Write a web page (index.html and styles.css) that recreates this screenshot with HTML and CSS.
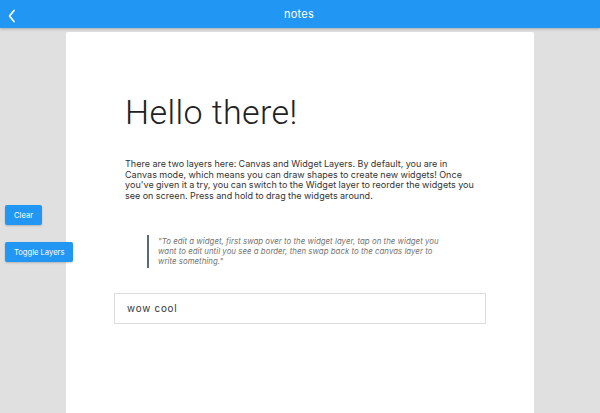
FILE: index.html
```html
<!DOCTYPE html>
<html>
<head>
<meta charset="utf-8">
<link rel="stylesheet" href="styles.css">
</head>
<body>
<header class="appbar">
  <svg class="back" width="10" height="14" viewBox="0 0 10 14"><path d="M8 1.5 L3.5 7 L8 12.5" fill="none" stroke="#fff" stroke-width="1.7" stroke-linecap="round" stroke-linejoin="round"/></svg>
  <div class="title">notes</div>
</header>
<div class="stage">
  <aside class="tools">
    <button class="btn">Clear</button>
    <button class="btn">Toggle Layers</button>
  </aside>
  <main class="paper">
    <h1 class="heading">Hello there!</h1>
    <p class="intro">There are two layers here: Canvas and Widget Layers. By default, you are in<br>Canvas mode, which means you can draw shapes to create new widgets! Once<br>you've given it a try, you can switch to the Widget layer to reorder the widgets you<br>see on screen. Press and hold to drag the widgets around.</p>
    <blockquote class="quote">"To edit a widget, first swap over to the widget layer, tap on the widget you<br>want to edit until you see a border, then swap back to the canvas layer to<br>write something."</blockquote>
    <div class="field">wow cool</div>
  </main>
  <div class="right"></div>
</div>
</body>
</html>
```
FILE: styles.css
```css
html, body {
  margin: 0;
  padding: 0;
  height: 100%;
}
body {
  background: #e1e0e1;
  font-family: "Inter", "Liberation Sans", sans-serif;
  overflow: hidden;
}
.appbar {
  position: relative;
  height: 28px;
  background: #2196f3;
  display: flex;
  align-items: center;
  justify-content: center;
  box-shadow: 0 1px 3px rgba(0,0,0,0.25);
  z-index: 2;
}
.back {
  position: absolute;
  left: 6px;
  top: 9px;
}
.title {
  color: #fff;
  font-size: 11px;
  letter-spacing: 0.2px;
  margin-left: -2px;
}
.stage {
  display: flex;
  padding-top: 4px;
  height: 381px;
}
.tools {
  width: 66px;
  display: flex;
  flex-direction: column;
  align-items: flex-start;
  padding-top: 173px;
  gap: 17px;
}
.btn {
  margin-left: 5px;
  background: #2196f3;
  color: #fff;
  border: none;
  border-radius: 2px;
  font-family: "Inter", "Liberation Sans", sans-serif;
  font-size: 7.6px;
  height: 20px;
  padding: 0 9px;
  box-shadow: 0 1px 2px rgba(0,0,0,0.2);
  white-space: nowrap;
  position: relative;
  z-index: 1;
}
.paper {
  width: 468px;
  background: #fff;
  box-sizing: border-box;
  padding: 54px 0 0 59px;
  border-radius: 2px 2px 0 0;
}
.heading {
  margin: 0;
  font-family: "Roboto", "Liberation Sans", sans-serif;
  font-weight: 300;
  font-size: 34px;
  line-height: 52px;
  color: #222;
  letter-spacing: 0.4px;
}
.intro {
  margin: 21px 0 0 0;
  width: 370px;
  white-space: nowrap;
  font-size: 9px;
  line-height: 10.5px;
  letter-spacing: 0.05px;
  word-spacing: -0.3px;
  color: #333;
}
.quote {
  margin: 34px 0 0 22px;
  border-left: 2px solid #5a6a7a;
  padding: 2px 0 2px 9px;
  width: 300px;
  white-space: nowrap;
  font-style: italic;
  font-size: 7.8px;
  line-height: 9.8px;
  letter-spacing: 0.05px;
  color: #737373;
}
.field {
  margin: 25px 0 0 -11px;
  width: 372px;
  height: 31px;
  box-sizing: border-box;
  border: 1px solid #ddd;
  padding: 0 12px;
  display: flex;
  align-items: center;
  font-size: 9.8px;
  letter-spacing: 0.8px;
  color: #333;
}
```
